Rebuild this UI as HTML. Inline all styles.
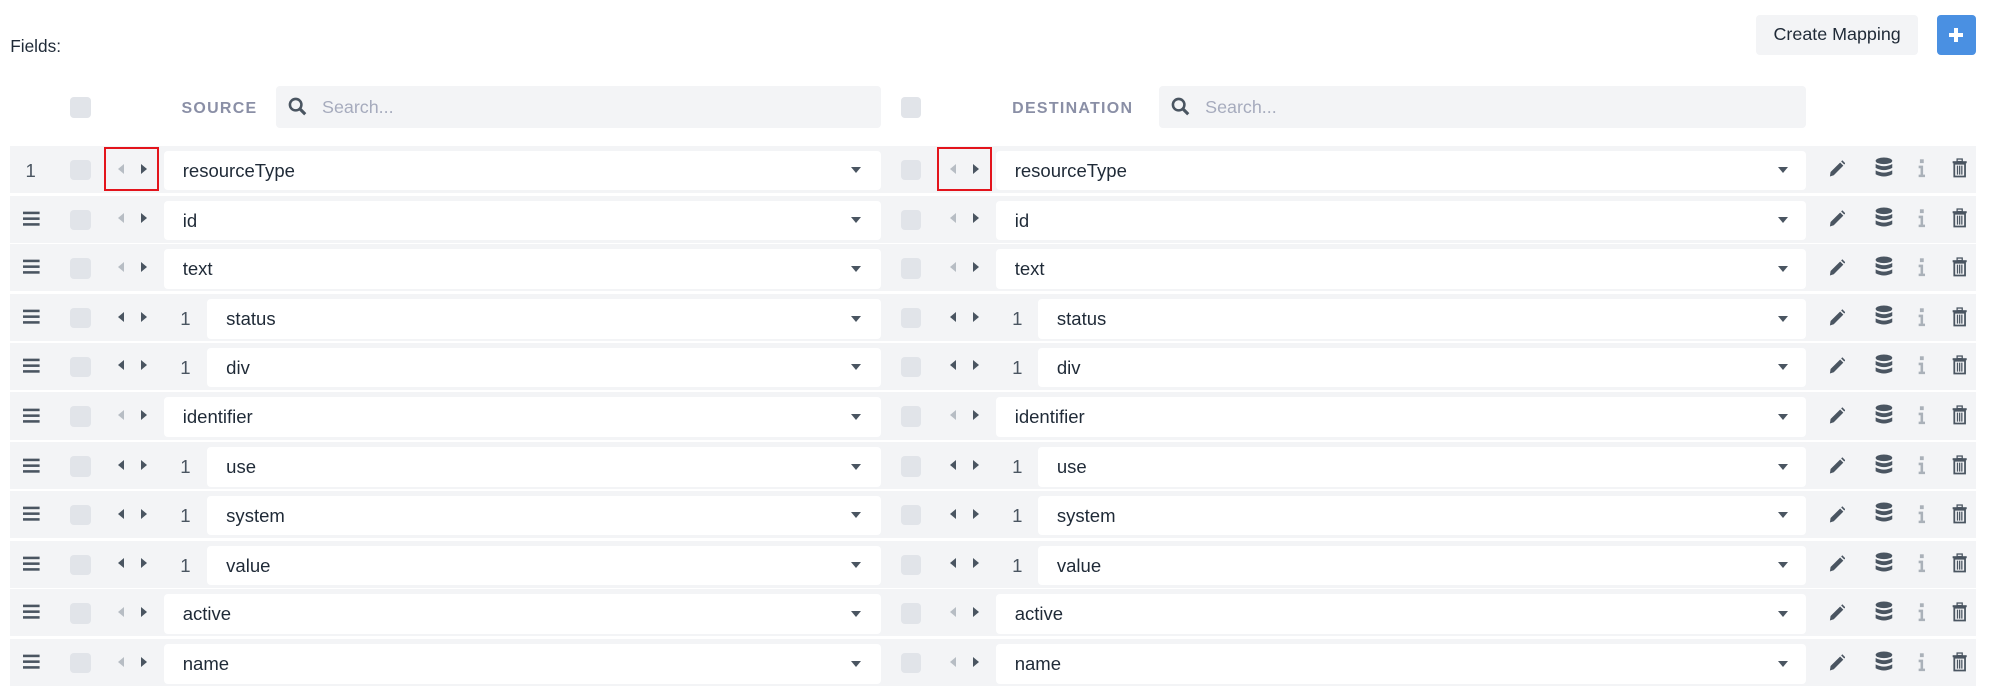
<!DOCTYPE html>
<html><head><meta charset="utf-8"><style>
html,body{margin:0;padding:0;background:#fff;overflow:hidden}
body{width:2004px;height:689px}
#w{zoom:1.278;position:relative;width:1568px;height:539px;font-family:"Liberation Sans",sans-serif;color:#1f2a37}
.a{position:absolute}
.cb{position:absolute;width:16px;height:16px;border-radius:3px;background:#e1e4e9}
.srch{position:absolute;top:67px;height:33px;background:#f3f4f6;border-radius:3px}
.srch span{position:absolute;left:36px;top:9px;font-size:14px;color:#a6abbd}
.lbl{position:absolute;top:78px;font-size:12.5px;letter-spacing:1px;color:#8a8fa6;font-weight:bold}
.row{position:absolute;left:8px;width:1538px;height:37px;background:#f3f4f6}
.box{position:absolute;top:4px;height:31px;background:#fff;border-radius:3px}
.box span{position:absolute;left:15px;top:7px;font-size:14.5px}
.car{position:absolute;top:14px;width:0;height:0;border-left:4px solid transparent;border-right:4px solid transparent;border-top:5px solid #4a5561}
.num{position:absolute;top:11px;font-size:14.5px;color:#4a5561}
.al,.ar{position:absolute;top:14px;width:0;height:0;border-top:4px solid transparent;border-bottom:4px solid transparent}
.al{border-right:5px solid #b7bdc4}.al.d{border-right-color:#4a5561}
.ar{border-left:5px solid #4a5561}
.ham{position:absolute;left:10px;top:12px}
.ic{position:absolute;top:10px}
.red{position:absolute;top:115px;width:40px;height:31px;border:2px solid #e3141c}
</style></head><body><div id="w">
<div class="a" style="left:8px;top:28px;font-size:13.5px">Fields:</div>
<div class="a" style="left:1374px;top:12px;width:127px;height:31px;background:#f3f4f6;border-radius:3px;font-size:14px;line-height:31px;text-align:center">Create Mapping</div>
<div class="a" style="left:1516px;top:12px;width:30px;height:31px;background:#4a90e2;border-radius:3px"><div class="a" style="left:13px;top:10px;width:3px;height:11px;background:#fff"></div><div class="a" style="left:9px;top:14px;width:11px;height:3px;background:#fff"></div></div>
<div class="cb" style="left:55px;top:76px"></div>
<div class="lbl" style="left:142px">SOURCE</div>
<div class="srch" style="left:216px;width:473px"><svg class="a" style="left:9px;top:9px" width="15" height="15" viewBox="0 0 15 15"><circle cx="6" cy="6" r="4.5" fill="none" stroke="#4a5561" stroke-width="2"/><path d="M9.5 9.5L13.5 13.5" stroke="#4a5561" stroke-width="2.4"/></svg><span>Search...</span></div>
<div class="cb" style="left:705px;top:76px"></div>
<div class="lbl" style="left:792px">DESTINATION</div>
<div class="srch" style="left:907px;width:506px"><svg class="a" style="left:9px;top:9px" width="15" height="15" viewBox="0 0 15 15"><circle cx="6" cy="6" r="4.5" fill="none" stroke="#4a5561" stroke-width="2"/><path d="M9.5 9.5L13.5 13.5" stroke="#4a5561" stroke-width="2.4"/></svg><span>Search...</span></div>
<div id="rows"></div>
<div class="red" style="left:81px"></div>
<div class="red" style="left:733px"></div>
</div>
<script>
var R=[["resourceType",0],["id",0],["text",0],["status",1],["div",1],["identifier",0],["use",1],["system",1],["value",1],["active",0],["name",0]];
var h="";
var ham='<svg class="ham" width="13" height="12" viewBox="0 0 13 12"><rect y="0.5" width="13" height="2" fill="#4a5561"/><rect y="5" width="13" height="2" fill="#4a5561"/><rect y="9.5" width="13" height="2" fill="#4a5561"/></svg>';
var pen='<svg class="ic" style="left:1422px" width="14" height="16" viewBox="0 0 14 16"><path d="M2 11L9.5 3.5L12 6L4.5 13.5L1.5 14.5Z" fill="#4a5561"/><path d="M10.3 2.7L11.2 1.8L13.6 4.2L12.7 5.1Z" fill="#4a5561"/></svg>';
var db='<svg class="ic" style="left:1459px;top:9px" width="14" height="18" viewBox="0 0 14 18"><ellipse cx="7" cy="3" rx="6.5" ry="2.6" fill="#4a5561"/><path d="M0.5 5.5Q7 9 13.5 5.5V8.5Q7 12 0.5 8.5Z" fill="#4a5561"/><path d="M0.5 10.5Q7 14 13.5 10.5V13.5Q7 17 0.5 13.5Z" fill="#4a5561"/></svg>';
var inf='<svg class="ic" style="left:1493px" width="6" height="16" viewBox="0 0 6 16"><rect x="1.5" y="1" width="3" height="3" fill="#aab1b9"/><path d="M0.5 6H4V13H5.5V15H0.5V13H2V8H0.5Z" fill="#aab1b9"/></svg>';
var tr='<svg class="ic" style="left:1519px" width="12" height="16" viewBox="0 0 12 16"><rect x="0.5" y="2.5" width="11" height="1.6" fill="#4a5561"/><rect x="4" y="0.8" width="4" height="2" fill="none" stroke="#4a5561" stroke-width="1"/><path d="M1.8 4.5H10.2V14.5H1.8Z" fill="none" stroke="#4a5561" stroke-width="1.4"/><path d="M4.3 6V13M6 6V13M7.7 6V13" stroke="#4a5561" stroke-width="1"/></svg>';
for(var i=0;i<R.length;i++){
 var t=Math.round(114+i*38.6), n=R[i][1], d=n?" d":"";
 h+='<div class="row" style="top:'+t+'px">';
 if(i==0)h+='<div class="num" style="left:12px">1</div>';else h+=ham;
 h+='<div class="cb" style="left:47px;top:11px"></div>';
 h+='<div class="al'+d+'" style="left:84px"></div><div class="ar" style="left:102px"></div>';
 if(n){h+='<div class="num" style="left:133px">1</div><div class="box" style="left:154px;width:527px"><span>'+R[i][0]+'</span><div class="car" style="left:504px;top:13px"></div></div>';}
 else{h+='<div class="box" style="left:120px;width:561px"><span>'+R[i][0]+'</span><div class="car" style="left:538px;top:13px"></div></div>';}
 h+='<div class="cb" style="left:697px;top:11px"></div>';
 h+='<div class="al'+d+'" style="left:735px"></div><div class="ar" style="left:753px"></div>';
 if(n){h+='<div class="num" style="left:784px">1</div><div class="box" style="left:804px;width:601px"><span>'+R[i][0]+'</span><div class="car" style="left:579px;top:13px"></div></div>';}
 else{h+='<div class="box" style="left:771px;width:634px"><span>'+R[i][0]+'</span><div class="car" style="left:612px;top:13px"></div></div>';}
 h+=pen+db+inf+tr;
 h+='</div>';
}
document.getElementById("rows").innerHTML=h;
</script>
</body></html>
